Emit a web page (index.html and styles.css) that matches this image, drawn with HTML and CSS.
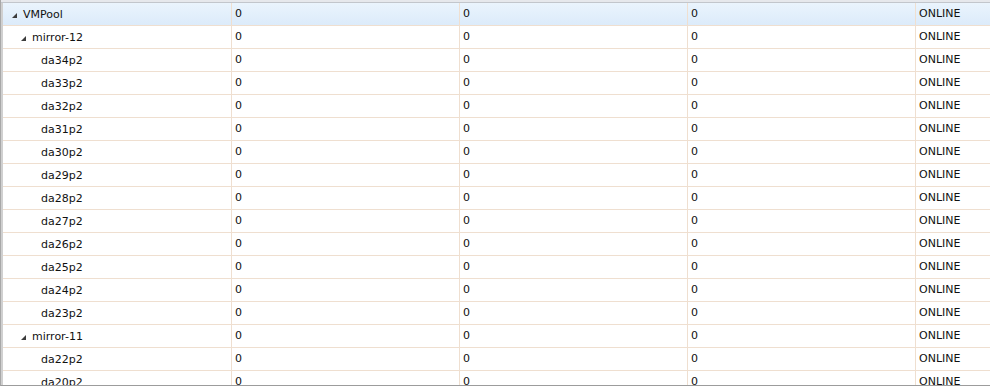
FILE: index.html
```html
<!DOCTYPE html>
<html>
<head>
<meta charset="utf-8">
<link rel="stylesheet" href="styles.css">
</head>
<body>
<div class="grid">
  <div class="header"></div>
  <div class="rows">
    <div class="row selected"><div class="cell name lvl0"><span class="tri"></span>VMPool</div><div class="cell">0</div><div class="cell">0</div><div class="cell">0</div><div class="cell">ONLINE</div></div>
    <div class="row"><div class="cell name lvl1"><span class="tri"></span>mirror-12</div><div class="cell">0</div><div class="cell">0</div><div class="cell">0</div><div class="cell">ONLINE</div></div>
    <div class="row"><div class="cell name lvl2">da34p2</div><div class="cell">0</div><div class="cell">0</div><div class="cell">0</div><div class="cell">ONLINE</div></div>
    <div class="row"><div class="cell name lvl2">da33p2</div><div class="cell">0</div><div class="cell">0</div><div class="cell">0</div><div class="cell">ONLINE</div></div>
    <div class="row"><div class="cell name lvl2">da32p2</div><div class="cell">0</div><div class="cell">0</div><div class="cell">0</div><div class="cell">ONLINE</div></div>
    <div class="row"><div class="cell name lvl2">da31p2</div><div class="cell">0</div><div class="cell">0</div><div class="cell">0</div><div class="cell">ONLINE</div></div>
    <div class="row"><div class="cell name lvl2">da30p2</div><div class="cell">0</div><div class="cell">0</div><div class="cell">0</div><div class="cell">ONLINE</div></div>
    <div class="row"><div class="cell name lvl2">da29p2</div><div class="cell">0</div><div class="cell">0</div><div class="cell">0</div><div class="cell">ONLINE</div></div>
    <div class="row"><div class="cell name lvl2">da28p2</div><div class="cell">0</div><div class="cell">0</div><div class="cell">0</div><div class="cell">ONLINE</div></div>
    <div class="row"><div class="cell name lvl2">da27p2</div><div class="cell">0</div><div class="cell">0</div><div class="cell">0</div><div class="cell">ONLINE</div></div>
    <div class="row"><div class="cell name lvl2">da26p2</div><div class="cell">0</div><div class="cell">0</div><div class="cell">0</div><div class="cell">ONLINE</div></div>
    <div class="row"><div class="cell name lvl2">da25p2</div><div class="cell">0</div><div class="cell">0</div><div class="cell">0</div><div class="cell">ONLINE</div></div>
    <div class="row"><div class="cell name lvl2">da24p2</div><div class="cell">0</div><div class="cell">0</div><div class="cell">0</div><div class="cell">ONLINE</div></div>
    <div class="row"><div class="cell name lvl2">da23p2</div><div class="cell">0</div><div class="cell">0</div><div class="cell">0</div><div class="cell">ONLINE</div></div>
    <div class="row"><div class="cell name lvl1"><span class="tri"></span>mirror-11</div><div class="cell">0</div><div class="cell">0</div><div class="cell">0</div><div class="cell">ONLINE</div></div>
    <div class="row"><div class="cell name lvl2">da22p2</div><div class="cell">0</div><div class="cell">0</div><div class="cell">0</div><div class="cell">ONLINE</div></div>
    <div class="row"><div class="cell name lvl2">da20p2</div><div class="cell">0</div><div class="cell">0</div><div class="cell">0</div><div class="cell">ONLINE</div></div>
  </div>
</div>
</body>
</html>
```
FILE: styles.css
```css
html, body {
  margin: 0;
  padding: 0;
  background: #ffffff;
}
.grid {
  height: 385px;
  border-bottom: 1px solid #9c9c9c;
  border-left: 1px solid #a8a8a8;
  box-shadow: inset 2px 0 0 #d0d0d0;
  overflow: hidden;
  font-family: "DejaVu Sans", Verdana, sans-serif;
  font-size: 11px;
  color: #111;
}
.header {
  height: 2px;
  background: #e6e8ec;
  border-bottom: 1px solid #c2c6cc;
  margin-left: -1px;
}
.rows {
  padding-left: 2px;
}
.row {
  display: grid;
  grid-template-columns: 229px 228px 228px 228px 1fr;
  height: 22px;
  border-bottom: 1px solid #efdfd0;
}
.row.selected {
  background: linear-gradient(#eaf4fd, #dcebfa);
}
.cell {
  border-right: 1px solid #efdfd0;
  padding-left: 3px;
  line-height: 21px;
  white-space: nowrap;
  overflow: hidden;
}
.cell:last-child {
  border-right: none;
}
.cell.name {
  display: flex;
  align-items: center;
}
.cell.lvl0 { padding-left: 9px; }
.cell.lvl1 { padding-left: 18px; }
.cell.lvl2 { padding-left: 38px; }
.tri {
  width: 0;
  height: 0;
  border-left: 5px solid transparent;
  border-bottom: 5px solid #3c3c3c;
  margin-right: 6px;
  margin-top: 3px;
}
```
